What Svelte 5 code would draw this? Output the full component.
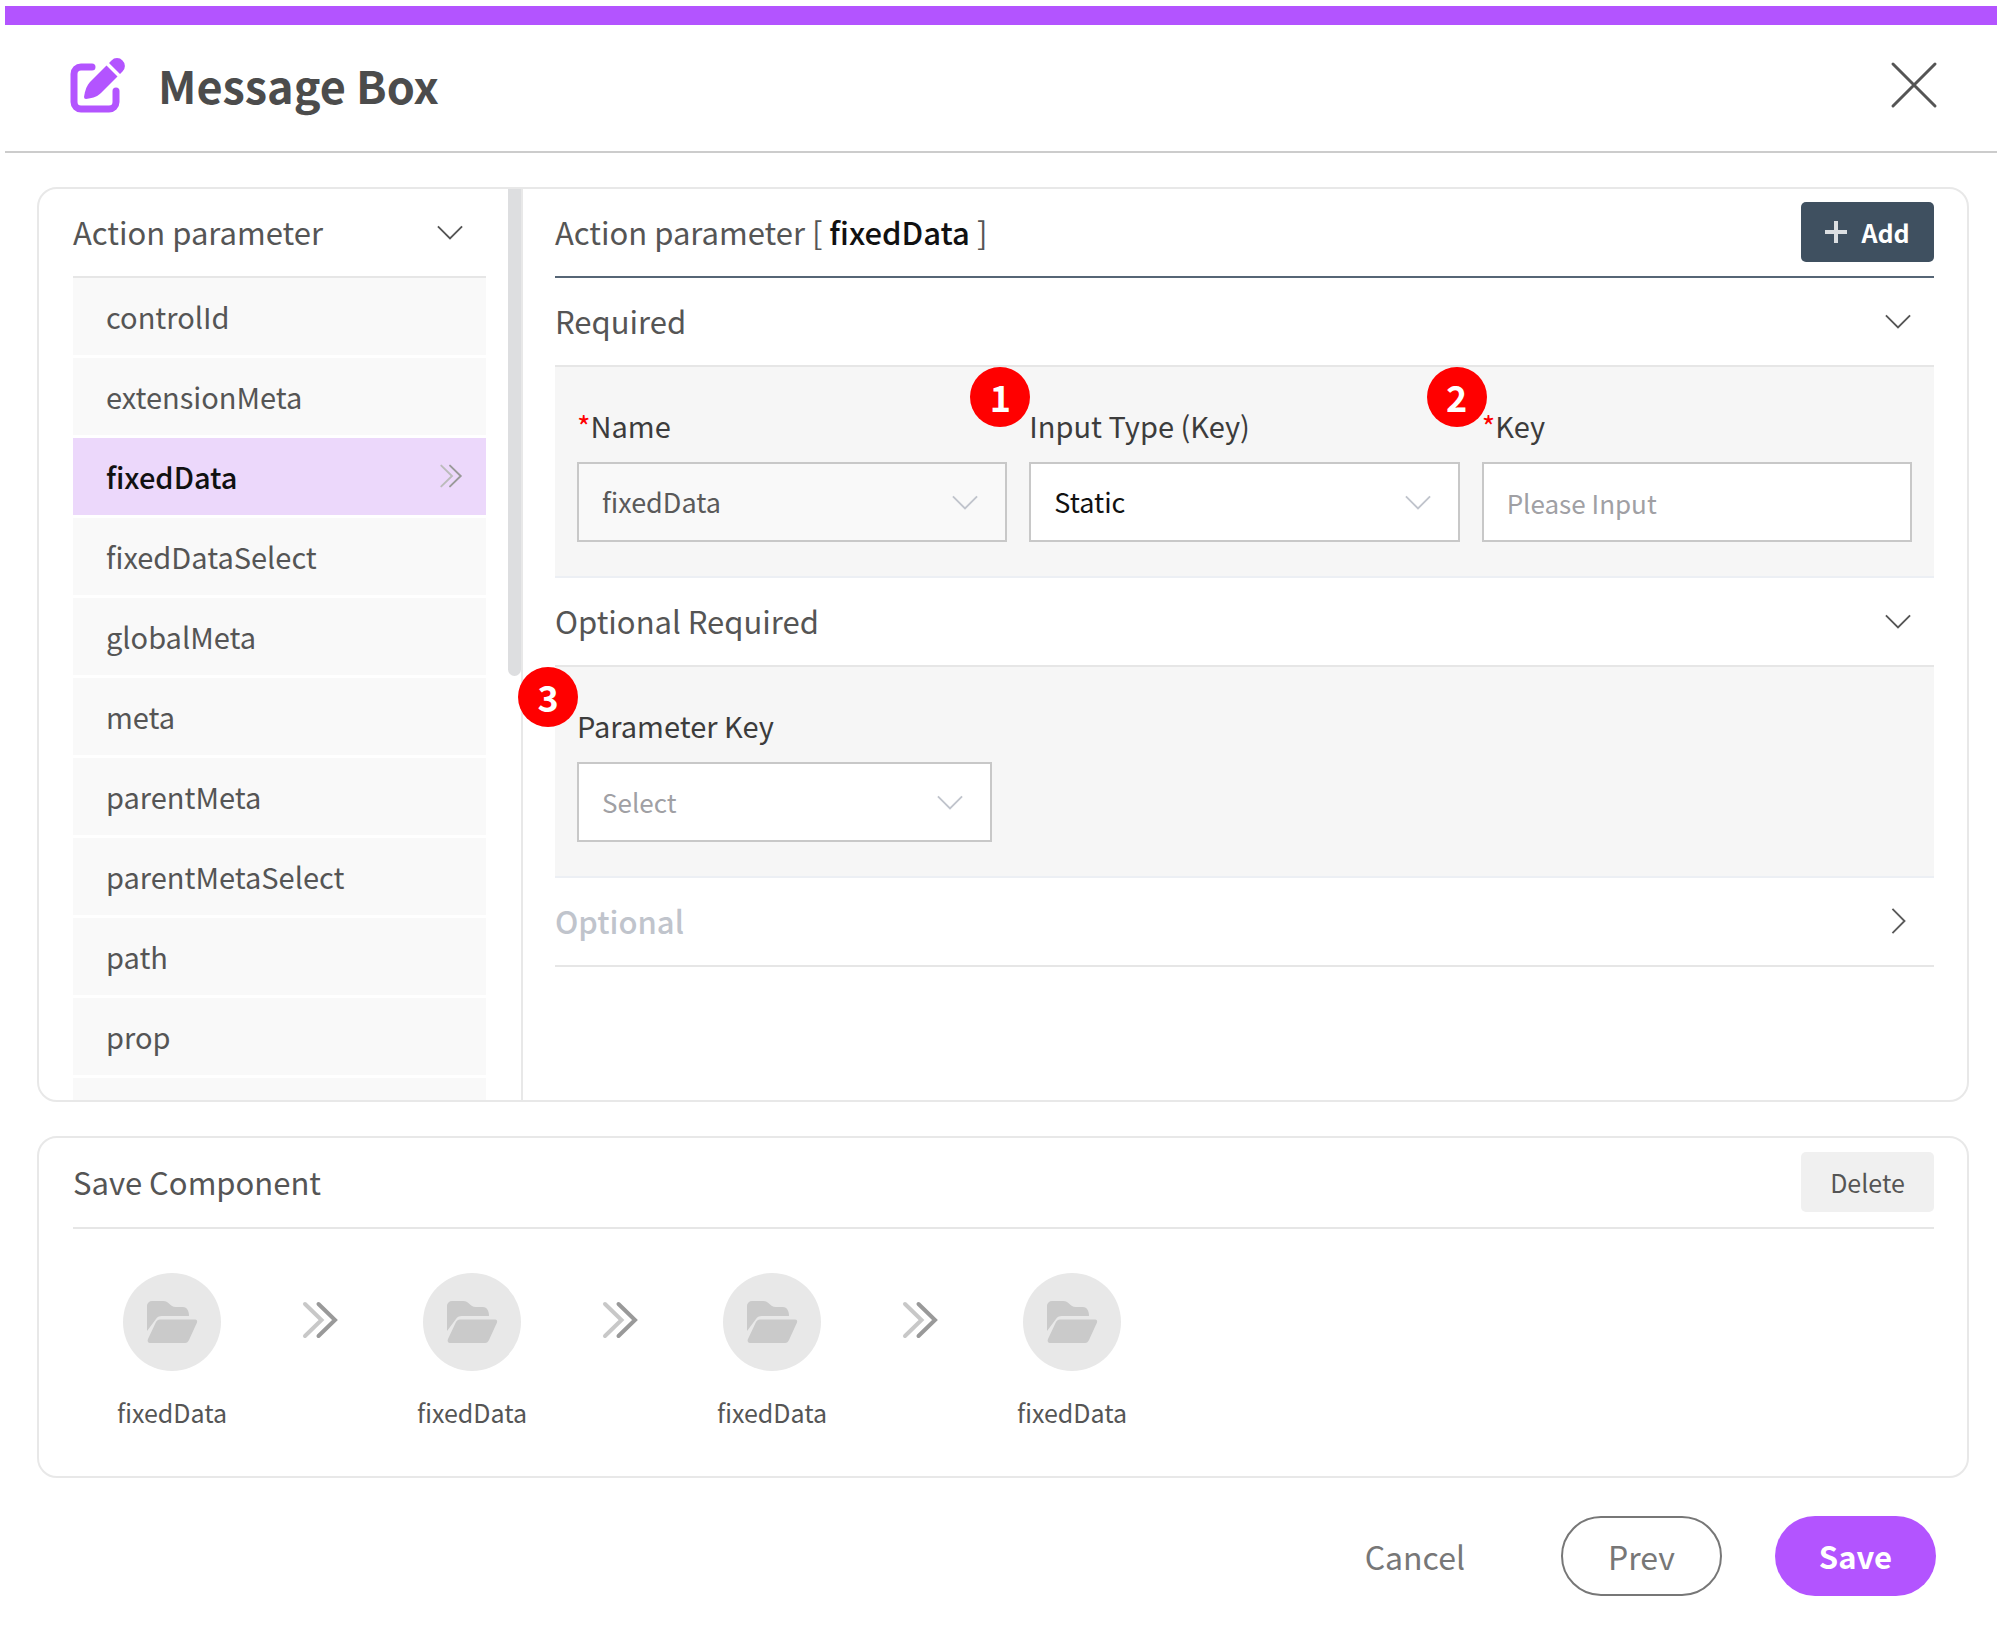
<script>
  const parameters = [
    'controlId', 'extensionMeta', 'fixedData', 'fixedDataSelect', 'globalMeta', 'meta',
    'parentMeta', 'parentMetaSelect', 'path', 'prop'
  ];
  let selected = $state('fixedData');
  let inputType = $state('Static');
  let parameterKey = $state('');
  let keyValue = $state('');
  const steps = ['fixedData', 'fixedData', 'fixedData', 'fixedData'];
</script>

{#snippet chevron(direction)}
  <svg class="chevron {direction}" viewBox="0 0 28 28" aria-hidden="true">
    <path d="M1 8 14 21 27 8" />
  </svg>
{/snippet}

{#snippet arrows()}
  <svg class="arrows" viewBox="0 0 34 36" aria-hidden="true">
    <path class="faint" d="M2 2 18.500 18 2 34" />
    <path d="M15.500 2 32 18 15.500 34" />
  </svg>
{/snippet}

<div class="modal" role="dialog" aria-labelledby="title">
  <header class="modal-header">
    <svg class="edit" viewBox="0 0 56 56" aria-hidden="true">
      <path class="frame" d="M22 10H11a7 7 0 0 0-7 7v28a7 7 0 0 0 7 7h28a7 7 0 0 0 7-7V34" />
      <path class="fill" d="M36.500 8.500 47.500 19.500 31 36C28 39 24 41 16 42a2 2 0 0 1-2-2C15 33 17 28 20 25Z" />
      <path class="fill" d="M39 6l2.500-2.500a7.500 7.500 0 0 1 11 0a7.500 7.500 0 0 1 0 11L50 17Z" />
    </svg>
    <h1 id="title">Message Box</h1>
    <button class="close" aria-label="Close">
      <svg viewBox="0 0 46 46" aria-hidden="true"><path d="M2 2 44 44M44 2 2 44" /></svg>
    </button>
  </header>

  <section class="card params">
    <aside>
      <button class="side-head">Action parameter {@render chevron('down')}</button>
      <ul>
        {#each parameters as name}
          <li>
            <button class="item" class:active={name === selected} onclick={() => (selected = name)}>
              {name}
              {#if name === selected}{@render arrows()}{/if}
            </button>
          </li>
        {/each}
      </ul>
      <div class="item"></div>
      <div class="thumb"></div>
    </aside>

    <div class="detail">
      <div class="detail-head">
        <h2>Action parameter [ <b>{selected}</b> ]</h2>
        <button class="small dark">
          <svg class="plus" viewBox="0 0 22 22" aria-hidden="true"><path d="M11 0V22M0 11H22" /></svg>
          Add
        </button>
      </div>

      <button class="fold">Required {@render chevron('down')}</button>
      <div class="panel">
        <div class="field">
          <label for="name"><i>*</i>Name</label>
          <div class="control">
            <select id="name" disabled><option>fixedData</option></select>
            {@render chevron('down')}
          </div>
        </div>
        <div class="field">
          <span class="badge">1</span>
          <label for="type">Input Type (Key)</label>
          <div class="control">
            <select id="type" bind:value={inputType}><option>Static</option></select>
            {@render chevron('down')}
          </div>
        </div>
        <div class="field">
          <span class="badge near">2</span>
          <label for="key"><i>*</i>Key</label>
          <div class="control">
            <input id="key" type="text" placeholder="Please Input" bind:value={keyValue} />
          </div>
        </div>
      </div>

      <button class="fold">Optional Required {@render chevron('down')}</button>
      <div class="panel single">
        <div class="field">
          <span class="badge">3</span>
          <label for="param">Parameter Key</label>
          <div class="control">
            <select id="param" class:empty={parameterKey === ''} bind:value={parameterKey}>
              <option value="">Select</option>
            </select>
            {@render chevron('down')}
          </div>
        </div>
      </div>

      <button class="fold muted">Optional {@render chevron('right')}</button>
    </div>
  </section>

  <section class="card saved">
    <div class="saved-head">
      <h2>Save Component</h2>
      <button class="small light">Delete</button>
    </div>
    <ol>
      {#each steps as step, i}
        {#if i > 0}<li class="between">{@render arrows()}</li>{/if}
        <li class="step">
          <span class="disc">
            <svg viewBox="0 0 50 42" aria-hidden="true">
              <path d="M0 30V5a5 5 0 0 1 5-5H16c7 0 6 6 13 6h7c4 0 6 4 6 9H15c-3 0-5 1-6 3Z" />
              <path d="M13 18.500H48c2 0 2.500 1.500 2 3L42 39c-1 2-2 3-4 3H3c-2 0-3-2-2-4L9 21c1-1.500 2-2.500 4-2.500Z" />
            </svg>
          </span>
          {step}
        </li>
      {/each}
    </ol>
  </section>

  <footer>
    <button class="action">Cancel</button>
    <button class="action outline">Prev</button>
    <button class="action primary">Save</button>
  </footer>
</div>

<style>
  :global(body) {
    background: #fff;
  }
  .modal {
    box-sizing: border-box;
    display: flex;
    flex-direction: column;
    height: 100vh;
    min-height: 1400px;
    padding: 6px 3px 34px 5px;
    font-family: 'Noto Sans CJK KR', 'Noto Sans', sans-serif;
    font-size: 31px;
    line-height: 48px;
    color: #555;
  }
  .modal * {
    box-sizing: border-box;
  }
  h1, h2, ul, ol {
    margin: 0;
    padding: 0;
    font-weight: 400;
  }
  h2 {
    font-size: 31px;
  }
  ul, ol {
    list-style: none;
  }
  button, select, input {
    font: inherit;
    color: inherit;
    margin: 0;
    padding: 0;
    border: 0;
    background: none;
    border-radius: 0;
    appearance: none;
    text-align: left;
  }
  svg {
    display: block;
    flex: none;
    fill: none;
    stroke: currentColor;
    stroke-width: 2;
    overflow: visible;
  }

  .modal-header {
    display: flex;
    align-items: center;
    height: 147px;
    flex: none;
    padding: 0 60px 7px 65px;
    border-top: 19px solid #b354ff;
    border-bottom: 2px solid #ccc;
  }
  .edit {
    width: 56px;
    height: 56px;
    stroke: none;
  }
  .edit .frame {
    stroke: #b354ff;
    stroke-width: 7;
    stroke-linecap: round;
  }
  .edit .fill {
    fill: #b354ff;
  }
  h1 {
    flex: 1;
    margin-left: 32px;
    font-size: 45px;
    line-height: 64px;
    font-weight: 700;
    color: #4c4c4c;
  }
  .close svg {
    width: 46px;
    height: 46px;
    color: #555;
    stroke-width: 3;
    stroke-linecap: round;
  }

  .card {
    margin: 34px 28px 0 32px;
    border: 2px solid #e8e8e8;
    border-radius: 20px;
    background: #fff;
  }
  .params {
    display: flex;
    flex: 1 1 0;
    min-height: 0;
    overflow: hidden;
  }
  aside {
    position: relative;
    flex: none;
    width: 484px;
    padding: 0 35px 0 34px;
    border-right: 2px solid #e8e8e8;
    overflow: hidden;
  }
  .thumb {
    position: absolute;
    top: 0;
    right: 0;
    width: 13px;
    height: 53.5%;
    border-radius: 0 0 7px 7px;
    background: #dddee0;
  }
  .chevron {
    width: 26px;
    height: 26px;
  }
  .right {
    transform: rotate(-90deg);
  }
  .side-head, .detail-head, .saved-head, .fold {
    display: flex;
    align-items: center;
    justify-content: space-between;
    width: 100%;
    height: 89px;
    padding-bottom: 1px;
    border-bottom: 2px solid #e6e6e6;
  }
  .side-head, .fold {
    padding-right: 23px;
  }
  .item {
    display: flex;
    align-items: center;
    justify-content: space-between;
    width: 100%;
    height: 77px;
    margin-bottom: 3px;
    padding: 0 24px 2px 33px;
    font-size: 29px;
    background: #f9f9f9;
  }
  .item.active {
    background: #ecd8fb;
    color: #111;
    font-weight: 500;
  }
  .arrows {
    width: 34px;
    height: 36px;
    stroke: #999;
    stroke-width: 4;
    stroke-linecap: round;
  }
  .arrows .faint {
    stroke: #c8c8c8;
  }
  .item .arrows {
    width: 22px;
    height: 24px;
    stroke-width: 3;
  }
  .item .faint {
    stroke: #bbb;
  }

  .detail {
    flex: 1;
    min-width: 0;
    padding: 0 33px 0 32px;
  }
  .detail-head {
    border-bottom-color: #566575;
  }
  .detail-head b {
    font-weight: 500;
    color: #111;
  }
  .small {
    display: flex;
    align-items: center;
    justify-content: center;
    gap: 14px;
    width: 133px;
    height: 60px;
    border-radius: 5px;
    font-size: 25px;
  }
  .dark {
    background: #3f5060;
    color: #fff;
    font-weight: 700;
  }
  .light {
    background: #f0f0f0;
  }
  .plus {
    width: 22px;
    height: 22px;
    stroke: #dcdfe2;
    stroke-width: 4;
  }
  .muted {
    color: #c0c4cc;
    font-weight: 500;
  }
  .muted .chevron {
    color: #5a5a5a;
  }
  .panel {
    display: grid;
    grid-template-columns: repeat(3, 1fr);
    gap: 22px;
    padding: 34px 22px 34px;
    border-bottom: 2px solid #eceff4;
    background: #f6f6f6;
  }
  .single {
    grid-template-columns: 415px;
  }
  .field {
    position: relative;
    display: grid;
    gap: 13px;
  }
  label {
    font-size: 29px;
    color: #3c3c3c;
  }
  label i {
    font-style: normal;
    color: #f00;
  }
  .badge {
    position: absolute;
    top: -34px;
    left: -59px;
    width: 60px;
    height: 60px;
    border-radius: 50%;
    background: #f00;
    color: #fff;
    font-size: 36px;
    line-height: 58px;
    font-weight: 700;
    text-align: center;
  }
  .near {
    left: -55px;
  }
  .control {
    display: grid;
    align-items: center;
  }
  .control > :global(*) {
    grid-area: 1 / 1;
  }
  select, input {
    width: 100%;
    height: 80px;
    padding: 0 23px;
    border: 2px solid #c8c8c8;
    background: #fff;
    color: #111;
    font-size: 27px;
    opacity: 1;
  }
  select:disabled {
    background: #f9f9f9;
    color: #5a5a5a;
    opacity: 1;
  }
  .empty, input {
    font-size: 26px;
  }
  .empty, input::placeholder {
    color: #a0a0a4;
    opacity: 1;
  }
  .control .chevron {
    justify-self: end;
    margin-right: 29px;
    color: #c0c4cc;
    pointer-events: none;
  }

  .saved {
    flex: none;
    padding: 0 33px 40px 34px;
  }
  .saved-head {
    height: 91px;
  }
  ol {
    display: flex;
    padding: 44px 0 0 24px;
  }
  .step, .between {
    display: flex;
    flex-direction: column;
    align-items: center;
    width: 150px;
  }
  .step {
    gap: 17px;
    font-size: 25px;
  }
  .between {
    padding: 29px 4px 0 0;
  }
  .disc {
    display: grid;
    place-items: center;
    width: 98px;
    height: 98px;
    border-radius: 50%;
    background: #e8e8e8;
  }
  .disc svg {
    width: 50px;
    height: 42px;
    fill: #cacaca;
    stroke: none;
  }

  footer {
    display: flex;
    align-items: center;
    justify-content: flex-end;
    flex: none;
    gap: 53px;
    padding: 38px 61px 0 0;
  }
  .action {
    height: 80px;
    font-size: 32px;
    color: #777;
  }
  .outline, .primary {
    width: 161px;
    border-radius: 40px;
    text-align: center;
  }
  .outline {
    margin-left: 43px;
    border: 2px solid #777;
  }
  .primary {
    background: #b354ff;
    color: #fff;
    font-size: 31px;
    font-weight: 700;
  }
</style>
